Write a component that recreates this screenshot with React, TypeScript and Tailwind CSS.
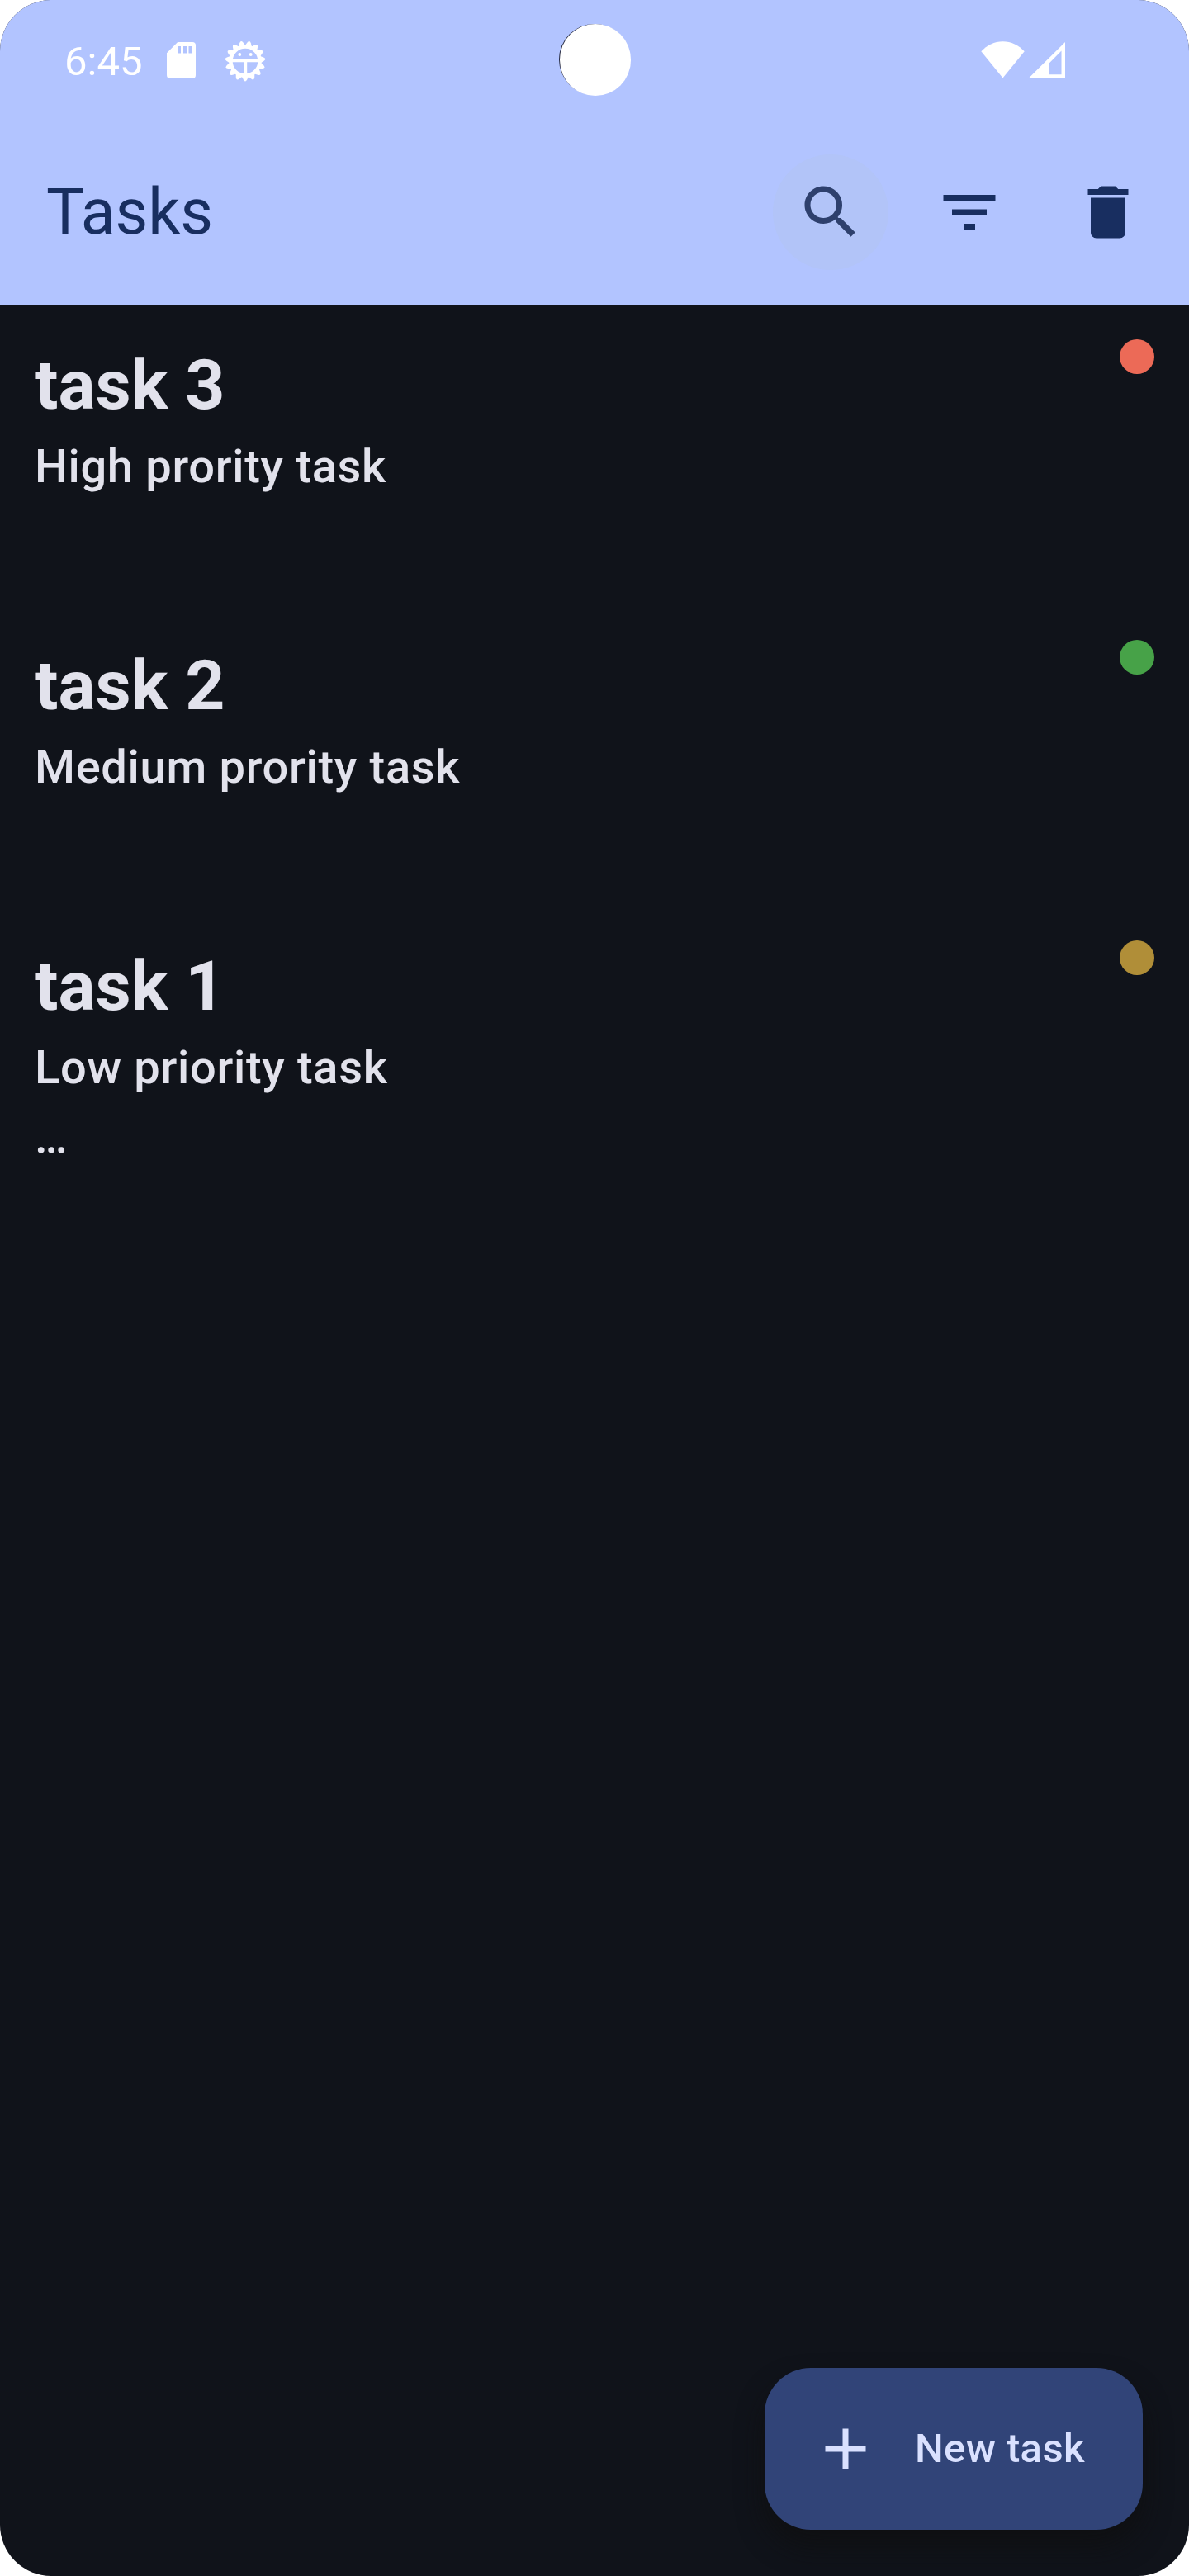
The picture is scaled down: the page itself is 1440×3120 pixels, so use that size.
import React from "react";

const tasks = [
  { title: "task 3", body: "High prority task", more: "", dot: "bg-[#ec6a57]" },
  { title: "task 2", body: "Medium prority task", more: "", dot: "bg-[#47a248]" },
  { title: "task 1", body: "Low priority task", more: "…", dot: "bg-[#b08e38]" },
];

const teeth = Array.from({ length: 15 }, (_, i) => 90 + i * 24);

function BugIcon() {
  return (
    <svg className="block size-[50px]" viewBox="-25 -25 50 50" fill="none" stroke="#fff">
      <circle r="17.5" strokeWidth="4.4" />
      {teeth.map((a) => (
        <path key={a} d="M18 -4.400 L22.600 -2.200 Q26.400 0 22.600 2.200 L18 4.400Z" fill="#fff" stroke="none" transform={`rotate(${a})`} />
      ))}
      <path d="M-17 -.8H17M.2 0V17" strokeWidth="4" />
      <circle cx="-6.7" cy="-8" r="1.9" fill="#fff" stroke="none" />
      <circle cx="6.7" cy="-8" r="1.9" fill="#fff" stroke="none" />
    </svg>
  );
}

function StatusBar() {
  return (
    <div className="relative flex h-[145px] items-center pl-[78px] pr-[149px] text-white">
      <span className="text-[49px] leading-[58px] mt-[5px] w-[124px]">6:45</span>
      <svg className="block h-11 w-[35px] mt-px" viewBox="0 0 35 44">
        <path fillRule="evenodd" fill="#fff" d="M13.2 0H31a4 4 0 0 1 4 4V40a4 4 0 0 1-4 4H4a4 4 0 0 1-4-4V13.200ZM13 5V13.500H17V5ZM20 5V13.500H24V5ZM26.500 5V13.500H30.700V5Z" />
      </svg>
      <div className="ml-[34.500px] mt-[2px]">
        <BugIcon />
      </div>
      <div className="absolute left-[677px] top-[29px] size-[86px] rounded-full bg-[#20243a]" />
      <div className="absolute left-[677.500px] top-[29px] size-[86.500px] rounded-full bg-white" />
      <svg className="ml-auto block h-[45px] w-[103px]" viewBox="0 0 103 45" fill="#fff">
        <path d="M.3 12.300C7 5 16.500 .300 26.500 .300S46 5 52.700 12.300L26.500 44.500Z" />
        <path fillRule="evenodd" d="M102 1V45H57.500ZM97.500 11.500L82 27.200V40.200H97.500Z" />
      </svg>
    </div>
  );
}

function Action({ d, pressed = false }: { d: string; pressed?: boolean }) {
  return (
    <button className="flex size-[168px] items-center justify-center">
      <span className={pressed ? "flex size-[140px] items-center justify-center rounded-full bg-[#b2c4f8]" : "flex size-[140px] items-center justify-center"}>
        <svg className="size-[84px]" viewBox="0 0 24 24" fill={pressed ? "#2e406d" : "#182e60"}>
          <path d={d} />
        </svg>
      </span>
    </button>
  );
}

export default function App() {
  return (
    <div className="h-[3120px] w-[1440px] bg-white">
      <div className="flex h-full flex-col overflow-hidden rounded-[62px] bg-[#10131a] font-[Roboto,sans-serif]">
        <header className="h-[369px] bg-[#b2c4ff]">
          <StatusBar />
          <div className="flex h-[224px] items-center pl-14 pr-[14px]">
            <h1 className="flex-1 text-[77px] leading-[98px] text-[#182e60]">Tasks</h1>
            <Action pressed d="M15.5 14h-.79l-.28-.27C15.41 12.59 16 11.11 16 9.5 16 5.91 13.09 3 9.500 3S3 5.910 3 9.500 5.910 16 9.500 16c1.610 0 3.090-.590 4.230-1.570l.270.280v.790l5 4.990L20.490 19l-4.990-5zm-6 0C7.010 14 5 11.990 5 9.500S7.010 5 9.500 5 14 7.010 14 9.500 11.990 14 9.500 14z" />
            <Action d="M10 18h4v-2h-4v2zM3 6v2h18V6H3zm3 7h12v-2H6v2z" />
            <Action d="M6 19c0 1.100.900 2 2 2h8c1.100 0 2-.900 2-2V7H6v12zM19 4h-3.500l-1-1h-5l-1 1H5v2h14V4z" />
          </div>
        </header>
        <main className="flex-1">
          {tasks.map((t) => (
            <article key={t.title} className="flex h-[364px] items-start justify-between p-[42px] text-[#e2e2ec]">
              <div>
                <h2 className="text-[84px] font-bold leading-[112px]">{t.title}</h2>
                <p className="text-[56px] font-medium leading-[84px] tracking-[0.7px]">{t.body}</p>
                <p className="text-[56px] font-medium leading-[84px] tracking-[0.7px]">{t.more}</p>
              </div>
              <span className={`size-[42px] rounded-full ${t.dot}`} />
            </article>
          ))}
        </main>
        <div className="flex justify-end px-14 pb-14">
          <button className="flex h-[196px] w-[458px] items-center gap-[42px] rounded-[56px] bg-[#314478] pl-14 text-[#dae1ff] shadow-[0_20px_32px_rgba(14,14,14,0.7)]">
            <svg className="size-[84px]" viewBox="0 0 24 24" fill="currentColor">
              <path d="M19 13h-6v6h-2v-6H5v-2h6V5h2v6h6v2z" />
            </svg>
            <span className="text-[49px] font-medium leading-[70px] tracking-[0.35px]">New task</span>
          </button>
        </div>
      </div>
    </div>
  );
}
